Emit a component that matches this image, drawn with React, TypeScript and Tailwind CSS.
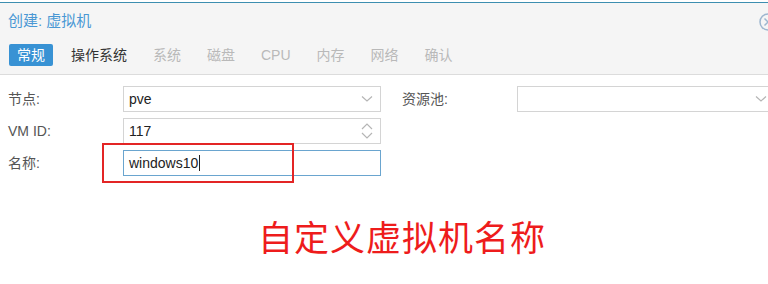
import React from 'react';

const FONT = '"Liberation Sans", "Noto Sans CJK SC", sans-serif';

const TABS: { label: string; state: 'active' | 'on' | 'off' }[] = [
  { label: '常规', state: 'active' },
  { label: '操作系统', state: 'on' },
  { label: '系统', state: 'off' },
  { label: '磁盘', state: 'off' },
  { label: 'CPU', state: 'off' },
  { label: '内存', state: 'off' },
  { label: '网络', state: 'off' },
  { label: '确认', state: 'off' },
];

function ChevronDown() {
  return (
    <svg width="12" height="8" viewBox="0 0 12 8" className="shrink-0">
      <path d="M1 1.5 L6 6 L11 1.5" fill="none" stroke="#b5b5b5" strokeWidth="1.2" />
    </svg>
  );
}

function Spinner() {
  return (
    <svg width="12" height="18" viewBox="0 0 12 18" className="shrink-0">
      <path d="M1 7 L6 2 L11 7" fill="none" stroke="#b5b5b5" strokeWidth="1.2" />
      <path d="M1 11 L6 16 L11 11" fill="none" stroke="#b5b5b5" strokeWidth="1.2" />
    </svg>
  );
}

function Field({
  value,
  trailing,
  focused,
  width = 'w-[258px]',
}: {
  value?: React.ReactNode;
  trailing?: React.ReactNode;
  focused?: boolean;
  width?: string;
}) {
  return (
    <div
      className={`${width} h-[26px] flex items-center justify-between pl-[5px] pr-[7px] bg-white border ${
        focused ? 'border-[#6aa5cf]' : 'border-[#d4d4d4]'
      }`}
    >
      <span className="text-[14px] text-[#222]">{value}</span>
      {trailing}
    </div>
  );
}

export default function App() {
  return (
    <div className="w-[768px] h-[284px] bg-white overflow-hidden relative" style={{ fontFamily: FONT }}>
      {/* En-tête */}
      <div className="mt-[2px] border-t border-[#3d8eb0] bg-[#f5f5f5] border-b border-b-[#dcdcdc] h-[73px] flex flex-col">
        <div className="h-[36px] flex items-center justify-between pl-2">
          <span className="text-[15px] text-[#4a98d4]">创建: 虚拟机</span>
          <svg width="20" height="20" viewBox="0 0 20 20" className="mr-[-10px] mt-[1px]">
            <circle cx="10" cy="10" r="8" fill="none" stroke="#9db6cf" strokeWidth="1.5" />
            <path d="M6.5 6.5 L13.5 13.5 M13.5 6.5 L6.5 13.5" stroke="#9db6cf" strokeWidth="1.5" />
          </svg>
        </div>
        <div className="flex items-center gap-[10px] pl-[9px] mt-[5px]">
          {TABS.map((t) => (
            <div
              key={t.label}
              className={`h-[22px] px-2 flex items-center text-[14px] ${
                t.state === 'active'
                  ? 'bg-[#3892d4] text-white rounded-[2px]'
                  : t.state === 'on'
                    ? 'text-[#333]'
                    : 'text-[#b9b9b9]'
              }`}
            >
              {t.label}
            </div>
          ))}
        </div>
      </div>

      {/* Formulaire */}
      <div className="flex pt-[11px]">
        <div className="flex flex-col gap-[5px]">
          <div className="flex items-center">
            <span className="w-[123px] pl-2 text-[14px] text-[#555]">节点:</span>
            <Field value="pve" trailing={<ChevronDown />} />
          </div>
          <div className="flex items-center mt-[1px]">
            <span className="w-[123px] pl-2 text-[14px] text-[#555]">VM ID:</span>
            <Field value="117" trailing={<Spinner />} />
          </div>
          <div className="flex items-center mt-[1px]">
            <span className="w-[123px] pl-2 text-[14px] text-[#555]">名称:</span>
            <Field
              focused
              value={
                <span className="flex items-center">
                  windows10
                  <span className="inline-block w-px h-[16px] bg-[#222] ml-px" />
                </span>
              }
            />
          </div>
        </div>
        <div className="flex items-start ml-[21px]">
          <span className="w-[115px] h-[26px] flex items-center text-[14px] text-[#555]">资源池:</span>
          <Field width="w-[258px]" trailing={<ChevronDown />} />
        </div>
      </div>

      {/* Annotation */}
      <div className="absolute left-[102px] top-[143px] w-[192px] h-[40px] border-2 border-[#e32525]" />
      <div
        className="pl-[258px] mt-[40px] text-[35px] leading-[40px] text-[#ee1c1c] tracking-[1px]"
        style={{ fontFamily: '"Noto Sans CJK SC", sans-serif' }}
      >
        自定义虚拟机名称
      </div>
    </div>
  );
}
